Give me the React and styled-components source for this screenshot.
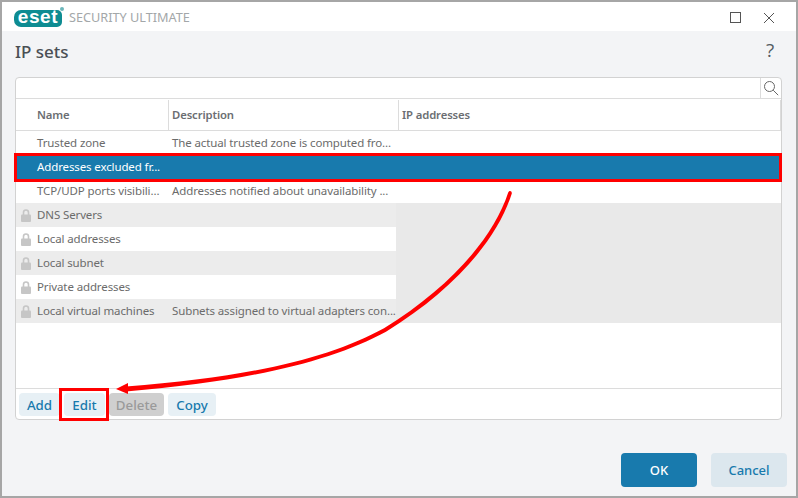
import React from "react";
import styled, { createGlobalStyle } from "styled-components";

const GlobalStyle = createGlobalStyle`
  html, body {
    margin: 0;
    padding: 0;
    background: #f3f4f6;
  }
  * {
    box-sizing: border-box;
  }
`;

const rows = [
  { name: "Trusted zone", desc: "The actual trusted zone is computed fro..." },
  { name: "Addresses excluded fr...", desc: "", selected: true },
  { name: "TCP/UDP ports visibili...", desc: "Addresses notified about unavailability ..." },
  { name: "DNS Servers", desc: "", locked: true, shaded: true },
  { name: "Local addresses", desc: "", locked: true },
  { name: "Local subnet", desc: "", locked: true, shaded: true },
  { name: "Private addresses", desc: "", locked: true },
  { name: "Local virtual machines", desc: "Subnets assigned to virtual adapters con...", locked: true, shaded: true },
];

function App() {
  return (
    <Window>
      <GlobalStyle />
      <TitleBar>
        <Logo>
          <LogoMark>eset</LogoMark>
          <LogoDot />
        </Logo>
        <Product>SECURITY ULTIMATE</Product>
        <WindowControls>
          <svg width="12" height="12" viewBox="0 0 12 12">
            <rect x="0.5" y="0.5" width="10" height="10" fill="none" stroke="#555" />
          </svg>
          <svg width="12" height="12" viewBox="0 0 12 12">
            <path d="M1 1l10 10M11 1L1 11" stroke="#555" fill="none" />
          </svg>
        </WindowControls>
      </TitleBar>

      <Body>
        <Heading>
          <h1>IP sets</h1>
          <Help>?</Help>
        </Heading>

        <Panel>
          <SearchRow>
            <SearchBox>
              <svg width="16" height="16" viewBox="0 0 16 16">
                <circle cx="6.5" cy="6.5" r="5" fill="none" stroke="#666" />
                <path d="M10.2 10.2l5 5" stroke="#666" fill="none" />
              </svg>
            </SearchBox>
          </SearchRow>
          <HeaderRow>
            <HeaderCell $width={153} $pad={21}>Name</HeaderCell>
            <HeaderCell $width={230} $pad={3}>Description</HeaderCell>
            <HeaderCell $pad={3}>IP addresses</HeaderCell>
          </HeaderRow>
          <RowList>
            {rows.map((row) => (
              <Row key={row.name} $selected={row.selected} $shaded={row.shaded}>
                <NameCell>
                  {row.locked && (
                    <LockIcon width="10" height="13" viewBox="0 0 10 13">
                      <path d="M2.5 6V3.5a2.5 2.5 0 0 1 5 0V6" fill="none" stroke="#c6c6c6" strokeWidth="1.6" />
                      <rect x="0" y="5.5" width="10" height="7.5" rx="1" fill="#c6c6c6" />
                    </LockIcon>
                  )}
                  {row.name}
                </NameCell>
                <DescCell>{row.desc}</DescCell>
                <AddrCell $locked={row.locked} />
              </Row>
            ))}
          </RowList>
          <Footer>
            <SmallButton $width={41}>Add</SmallButton>
            <SmallButton $width={41}>Edit</SmallButton>
            <SmallButton $width={55} disabled>Delete</SmallButton>
            <SmallButton $width={48}>Copy</SmallButton>
          </Footer>
        </Panel>

        <Actions>
          <DialogButton $primary>OK</DialogButton>
          <DialogButton>Cancel</DialogButton>
        </Actions>
      </Body>

      <Highlight $left={14} $top={153} $width={768} $height={29} />
      <Highlight $left={59} $top={388} $width={50} $height={33} />
      <Arrow width="798" height="498" viewBox="0 0 798 498">
        <path
          d="M508.2 192.5C493 239 448.5 288.5 384 328.3C329 358.5 250 377 126 386.5L126 391.5C250 381 331 361.5 386 331.7C451.5 291.5 497 241 511.8 193.5C512 190.5 509 190 508.2 192.5Z"
          fill="#ff0000"
        />
        <path d="M116 389L128 383V394Z" fill="#ff0000" />
      </Arrow>
    </Window>
  );
}

const Window = styled.div`
  position: relative;
  width: 798px;
  height: 498px;
  display: flex;
  flex-direction: column;
  border: 2px solid #a6a6a6;
  background: #f3f4f6;
  overflow: hidden;
  font-family: "Noto Sans", sans-serif;
  font-size: 11.5px;
  letter-spacing: -0.12px;
  color: #6b6b6b;
`;

const TitleBar = styled.div`
  height: 29px;
  flex: none;
  display: flex;
  align-items: center;
  padding-left: 12px;
  background: #fff;
`;

const Logo = styled.div`
  position: relative;
  width: 48px;
  height: 17px;
  margin-top: 3px;
`;

const LogoMark = styled.span`
  display: block;
  height: 17px;
  border-radius: 7px 5px 5px 7px;
  background: #0e8c92;
  color: #fff;
  font-family: "Liberation Sans", sans-serif;
  font-size: 19px;
  font-weight: 700;
  line-height: 14px;
  letter-spacing: 0.6px;
  text-align: center;
`;

const LogoDot = styled.span`
  position: absolute;
  top: -3px;
  right: -2px;
  width: 4px;
  height: 4px;
  border-radius: 50%;
  background: #6cb6ba;
`;

const Product = styled.span`
  margin-left: 7px;
  margin-top: 1px;
  font-size: 12.7px;
  letter-spacing: 0;
  color: #a3a7a9;
`;

const WindowControls = styled.div`
  margin-left: auto;
  margin-top: 2px;
  padding-right: 21px;
  display: flex;
  align-items: center;
  gap: 21px;
`;

const Body = styled.div`
  flex: 1;
  display: flex;
  flex-direction: column;
  padding: 0 14px 0 13px;
`;

const Heading = styled.div`
  height: 46px;
  flex: none;
  display: flex;
  align-items: center;
  justify-content: space-between;

  h1 {
    margin: 0 0 6px;
    font-size: 17px;
    font-weight: 500;
    letter-spacing: 0;
    color: #4a4f54;
  }
`;

const Help = styled.span`
  margin-right: 8px;
  margin-bottom: 8px;
  font-family: "Open Sans", sans-serif;
  font-size: 19px;
  font-weight: 400;
  color: #555c63;
`;

const Panel = styled.div`
  height: 343px;
  flex: none;
  display: flex;
  flex-direction: column;
  border: 1px solid #d2d2d2;
  border-radius: 4px;
  background: #fff;
`;

const SearchRow = styled.div`
  height: 21px;
  flex: none;
  display: flex;
  justify-content: flex-end;
  border-bottom: 1px solid #dcdcdc;
`;

const SearchBox = styled.div`
  width: 21px;
  display: flex;
  align-items: center;
  justify-content: center;
  border-left: 1px solid #dcdcdc;
`;

const HeaderRow = styled.div`
  height: 32px;
  flex: none;
  display: flex;
  border-bottom: 1px solid #dcdcdc;
  font-weight: 600;
  color: #6b6e72;
`;

const HeaderCell = styled.div`
  ${(p) => (p.$width ? `width: ${p.$width}px;` : "flex: 1;")}
  padding-left: ${(p) => p.$pad}px;
  padding-bottom: 2px;
  display: flex;
  align-items: center;
  border-right: 1px solid #dcdcdc;
  font-size: 11.3px;
  margin-top: 1px;
`;

const RowList = styled.div`
  flex: 1;
  border-bottom: 1px solid #dcdcdc;
`;

const Row = styled.div`
  height: 24px;
  display: flex;
  align-items: center;
  background: ${(p) => (p.$selected ? "#187aad" : p.$shaded ? "#ececec" : "#fff")};
  color: ${(p) => (p.$selected ? "#fff" : "#6b6b6b")};
`;

const NameCell = styled.div`
  position: relative;
  width: 153px;
  padding-left: 21px;
  padding-bottom: 2px;
  align-self: stretch;
  display: flex;
  align-items: center;
  white-space: nowrap;
`;

const LockIcon = styled.svg`
  position: absolute;
  left: 5px;
  top: 6px;
`;

const DescCell = styled.div`
  width: 227px;
  padding-left: 3px;
  padding-bottom: 2px;
  white-space: nowrap;
`;

const AddrCell = styled.div`
  flex: 1;
  align-self: stretch;
  background: ${(p) => (p.$locked ? "#e9e9e9" : "transparent")};
`;

const Footer = styled.div`
  height: 30px;
  flex: none;
  display: flex;
  align-items: center;
  gap: 4px;
  padding: 1px 0 0 3px;
`;

const SmallButton = styled.button`
  width: ${(p) => p.$width}px;
  height: 23px;
  padding: 0;
  border: none;
  border-radius: 4px;
  background: ${(p) => (p.disabled ? "#cfcfcf" : "#e7f0f5")};
  color: ${(p) => (p.disabled ? "#9a9a9a" : "#187aad")};
  font-family: inherit;
  font-size: 13.3px;
  font-weight: 500;
`;

const Actions = styled.div`
  flex: 1;
  display: flex;
  justify-content: flex-end;
  align-items: flex-start;
  gap: 14px;
  margin-right: -5px;
  padding-top: 33px;
`;

const DialogButton = styled.button`
  width: 76px;
  height: 34px;
  border: none;
  border-radius: 4px;
  background: ${(p) => (p.$primary ? "#187aad" : "#dce7ee")};
  color: ${(p) => (p.$primary ? "#fff" : "#187aad")};
  font-family: inherit;
  font-size: 13px;
  font-weight: 500;
`;

const Highlight = styled.div`
  position: absolute;
  left: ${(p) => p.$left - 2}px;
  top: ${(p) => p.$top - 2}px;
  width: ${(p) => p.$width}px;
  height: ${(p) => p.$height}px;
  border: 3px solid #ff0000;
`;

const Arrow = styled.svg`
  position: absolute;
  left: -2px;
  top: -2px;
  pointer-events: none;
`;

export default App;
